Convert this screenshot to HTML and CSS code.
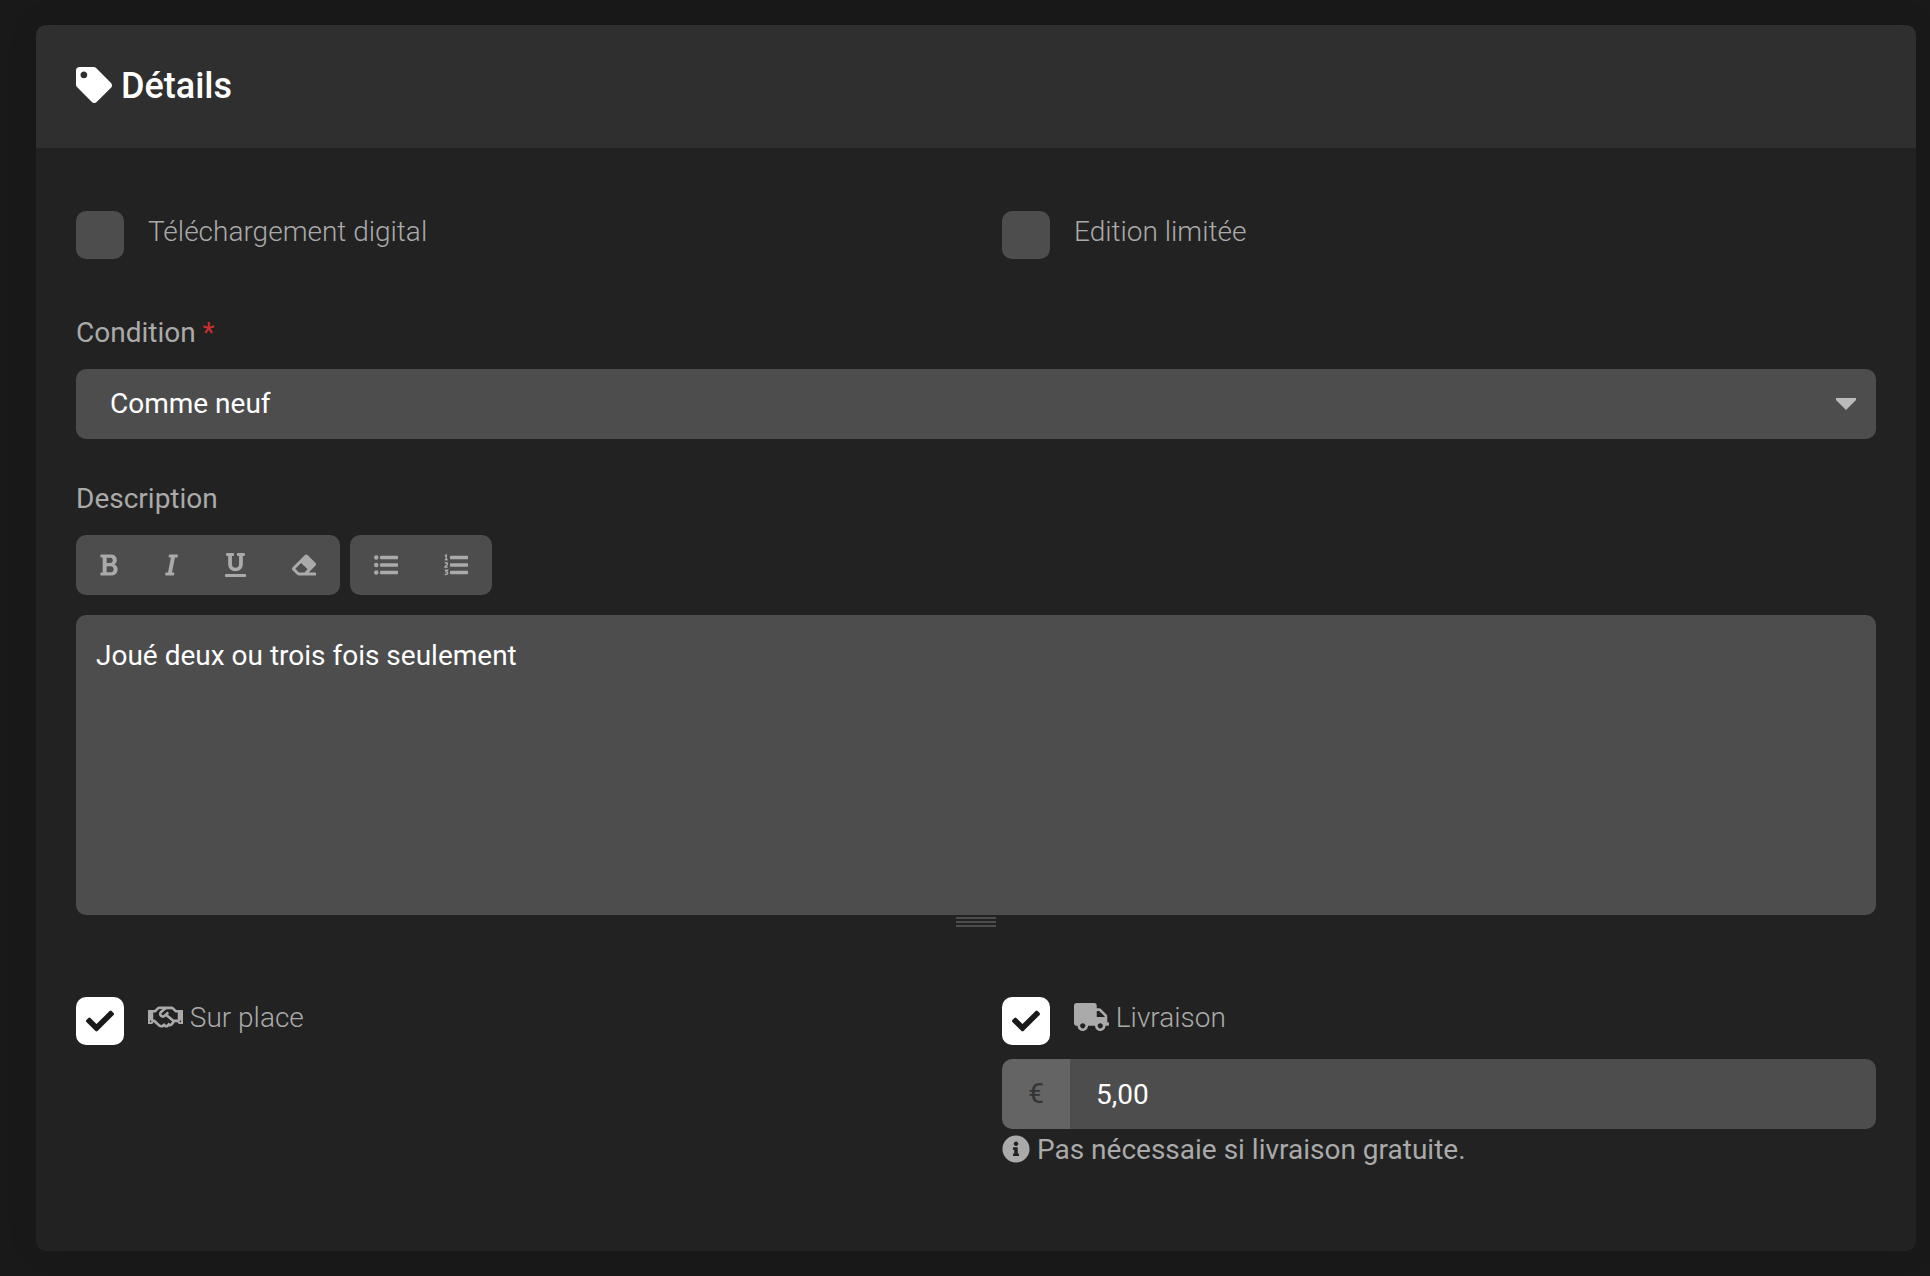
FILE: index.html
```html
<!DOCTYPE html>
<html lang="fr">
<head>
<meta charset="utf-8">
<meta name="viewport" content="width=device-width, initial-scale=1">
<title>Détails</title>
<link rel="stylesheet" href="styles.css">
</head>
<body>
<form class="card">
  <header class="card-header">
    <h2 class="card-title"><svg class="icon" viewBox="0 0 512 512" aria-hidden="true"><path d="M0 252.118V48C0 21.49 21.49 0 48 0h204.118a48 48 0 0 1 33.941 14.059l211.882 211.882c18.744 18.745 18.744 49.136 0 67.882L293.823 497.941c-18.745 18.744-49.136 18.744-67.882 0L14.059 286.059A48 48 0 0 1 0 252.118zM112 64c-26.51 0-48 21.49-48 48s21.49 48 48 48 48-21.49 48-48-21.49-48-48-48z"/></svg> Détails</h2>
  </header>
  <div class="card-body">
    <div class="columns">
      <div class="check">
        <input class="check-input" type="checkbox" id="digital">
        <label class="check-label" for="digital">Téléchargement digital</label>
      </div>
      <div class="check">
        <input class="check-input" type="checkbox" id="limited">
        <label class="check-label" for="limited">Edition limitée</label>
      </div>
    </div>

    <div class="field field-condition">
      <label class="field-label" for="condition">Condition <span class="required">*</span></label>
      <div class="select-wrap">
        <select class="control select" id="condition">
          <option selected>Comme neuf</option>
        </select>
        <svg class="select-arrow" viewBox="0 0 20 12" aria-hidden="true"><path d="M0 0h20v2L10 12 0 2z"/></svg>
      </div>
    </div>

    <div class="field">
      <label class="field-label" for="description">Description</label>
      <div class="toolbar">
        <div class="button-group">
          <button class="tool" type="button" aria-label="Gras"><svg class="icon icon-bold" viewBox="0 0 384 512"><path d="M304.793 243.891c33.639-18.537 53.657-54.16 53.657-95.693 0-48.236-26.25-87.626-68.626-104.179C265.138 34.01 240.849 32 209.661 32H24c-8.837 0-16 7.163-16 16v33.049c0 8.837 7.163 16 16 16h33.113v318.53H24c-8.837 0-16 7.163-16 16V464c0 8.837 7.163 16 16 16h195.69c24.203 0 44.834-1.289 66.866-7.584C337.52 457.193 376 410.647 376 350.014c0-52.168-26.573-91.684-71.207-106.123zM142.217 100.809h67.444c16.294 0 27.536 2.019 37.525 6.717 15.828 8.479 24.906 26.502 24.906 49.446 0 35.029-20.32 56.79-53.029 56.79h-76.846V100.809zm112.642 305.475c-10.14 4.056-22.677 4.907-31.409 4.907h-81.233V281.943h84.367c39.645 0 63.057 25.38 63.057 63.057.001 28.425-13.66 52.483-34.782 61.284z"/></svg></button>
          <button class="tool" type="button" aria-label="Italique"><svg class="icon icon-italic" viewBox="0 0 320 512"><path d="M204.758 416h-33.849l62.092-320h40.725a16 16 0 0 0 15.704-12.937l6.242-32C297.599 41.184 290.034 32 279.968 32H120.235a16 16 0 0 0-15.704 12.937l-6.242 32C96.362 86.816 103.927 96 113.993 96h33.846l-62.09 320H46.278a16 16 0 0 0-15.704 12.935l-6.245 32C22.402 470.815 29.967 480 40.034 480h158.479a16 16 0 0 0 15.704-12.935l6.245-32c1.927-9.88-5.638-19.065-15.704-19.065z"/></svg></button>
          <button class="tool" type="button" aria-label="Souligné"><svg class="icon icon-underline" viewBox="0 0 448 512"><path d="M224.264 388.24c-91.669 0-156.603-51.165-156.603-151.392V64H39.37c-8.837 0-16-7.163-16-16V16c0-8.837 7.163-16 16-16h137.39c8.837 0 16 7.163 16 16v32c0 8.837-7.163 16-16 16h-28.813v172.848c0 53.699 28.314 79.444 76.317 79.444 46.966 0 75.796-25.434 75.796-79.965V64h-28.291c-8.837 0-16-7.163-16-16V16c0-8.837 7.163-16 16-16h136.868c8.837 0 16 7.163 16 16v32c0 8.837-7.163 16-16 16h-28.291v172.848c0 99.405-64.881 151.392-156.082 151.392zM16 448h416c8.837 0 16 7.163 16 16v32c0 8.837-7.163 16-16 16H16c-8.837 0-16-7.163-16-16v-32c0-8.837 7.163-16 16-16z"/></svg></button>
          <button class="tool" type="button" aria-label="Effacer la mise en forme"><svg class="icon" viewBox="0 0 512 512"><path d="M497.941 273.941c18.745-18.745 18.745-49.137 0-67.882l-160-160c-18.745-18.745-49.136-18.746-67.883 0l-256 256c-18.745 18.745-18.745 49.137 0 67.882l96 96A48.004 48.004 0 0 0 144 480h356c6.627 0 12-5.373 12-12v-40c0-6.627-5.373-12-12-12H355.883l142.058-142.059zm-302.627-62.627l137.373 137.373L265.373 416H150.628l-80-80 124.686-124.686z"/></svg></button>
        </div>
        <div class="button-group">
          <button class="tool" type="button" aria-label="Liste à puces"><svg class="icon" viewBox="0 0 512 512"><circle cx="48" cy="96" r="48"/><circle cx="48" cy="256" r="48"/><circle cx="48" cy="416" r="48"/><rect x="128" y="60" width="384" height="72" rx="16"/><rect x="128" y="220" width="384" height="72" rx="16"/><rect x="128" y="380" width="384" height="72" rx="16"/></svg></button>
          <button class="tool" type="button" aria-label="Liste numérotée"><svg class="icon" viewBox="0 0 512 512"><rect x="128" y="60" width="384" height="72" rx="16"/><rect x="128" y="220" width="384" height="72" rx="16"/><rect x="128" y="380" width="384" height="72" rx="16"/><path class="stroke" d="M18 66l30-20v96M16 144h64M18 218c20-18 56-12 56 14 0 28-50 40-54 70h62M18 368h56l-28 34c52-4 44 68-30 54"/></svg></button>
        </div>
      </div>
      <textarea class="control editor" id="description">Joué deux ou trois fois seulement</textarea>
      <div class="grip" aria-hidden="true"></div>
    </div>

    <div class="columns">
      <div class="check">
        <input class="check-input" type="checkbox" id="pickup" checked>
        <label class="check-label" for="pickup"><svg class="icon icon-wide" viewBox="0 0 640 512" aria-hidden="true"><path d="M519.2 127.9l-47.6-47.6A56.252 56.252 0 0 0 432 64H205.2c-14.8 0-29.1 5.9-39.6 16.3L118 127.9H0v255.7h64c17.6 0 31.8-14.2 31.9-31.7h9.1l84.6 76.4c30.9 25.1 73.8 25.7 105.6 3.8 12.5 10.8 26 15.9 41.1 15.9 18.2 0 35.3-7.4 48.8-24 22.1 8.7 48.2 2.6 64-16.8l26.2-32.3c5.6-6.9 9.1-14.8 10.9-23h57.9c.1 17.5 14.4 31.7 31.9 31.7h64V127.9H519.2zM48 351.6c-8.8 0-16-7.2-16-16s7.2-16 16-16 16 7.2 16 16c0 8.9-7.2 16-16 16zm390-6.9l-26.1 32.2c-2.8 3.4-7.8 4-11.3 1.2l-23.9-19.4-30 36.5c-6 7.3-15 4.8-18 2.4l-36.8-31.5-15.6 19.2c-13.9 17.1-39.2 19.7-55.3 6.6l-97.3-88H96V175.8h41.9l61.7-61.6c2-.8 3.7-1.5 5.7-2.3H262l-38.7 35.5c-29.4 26.9-31.1 72.3-4.4 101.3 14.8 16.2 61.2 41.2 101.5 4.4l8.2-7.5 108.2 87.8c3.4 2.8 3.9 7.9 1.2 11.3zm106-40.8h-69.2c-2.3-2.8-4.9-5.4-7.7-7.7l-102.7-83.4 12.5-11.4c6.5-6 7-16.1 1-22.6L367 167.1c-6-6.5-16.1-6.9-22.6-1l-55.2 50.6c-9.5 8.7-25.7 9.4-34.6 0-9.3-9.9-8.5-25.1 1.2-33.9l65.6-60.1c7.4-6.8 17-10.5 27-10.5l83.7-.2c2.1 0 4.1.8 5.5 2.3l61.7 61.6H544v128zm48 47.7c-8.8 0-16-7.2-16-16s7.2-16 16-16 16 7.2 16 16c0 8.9-7.2 16-16 16z"/></svg> Sur place</label>
      </div>
      <div class="delivery">
        <div class="check">
          <input class="check-input" type="checkbox" id="delivery" checked>
          <label class="check-label" for="delivery"><svg class="icon icon-wide" viewBox="0 0 640 512" aria-hidden="true"><path d="M624 352h-16V243.9c0-12.7-5.1-24.9-14.1-33.9L494 110.1c-9-9-21.2-14.1-33.9-14.1H416V48c0-26.5-21.5-48-48-48H48C21.5 0 0 21.5 0 48v320c0 26.5 21.5 48 48 48h16c0 53 43 96 96 96s96-43 96-96h128c0 53 43 96 96 96s96-43 96-96h48c8.8 0 16-7.2 16-16v-32c0-8.8-7.2-16-16-16zM160 464c-26.5 0-48-21.5-48-48s21.5-48 48-48 48 21.5 48 48-21.5 48-48 48zm320 0c-26.5 0-48-21.5-48-48s21.5-48 48-48 48 21.5 48 48-21.5 48-48 48zm80-208H416V144h44.1l99.9 99.9V256z"/></svg> Livraison</label>
        </div>
        <div class="input-group">
          <label class="input-prefix" for="price">€</label>
          <input class="control input" type="text" id="price" value="5,00" aria-describedby="price-help">
        </div>
        <p class="help" id="price-help"><svg class="icon" viewBox="0 0 512 512" aria-hidden="true"><path d="M256 8C119.043 8 8 119.083 8 256c0 136.997 111.043 248 248 248s248-111.003 248-248C504 119.083 392.957 8 256 8zm0 110c23.196 0 42 18.804 42 42s-18.804 42-42 42-42-18.804-42-42 18.804-42 42-42zm56 254c0 6.627-5.373 12-12 12h-88c-6.627 0-12-5.373-12-12v-24c0-6.627 5.373-12 12-12h12v-64h-12c-6.627 0-12-5.373-12-12v-24c0-6.627 5.373-12 12-12h64c6.627 0 12 5.373 12 12v100h12c6.627 0 12 5.373 12 12v24z"/></svg> Pas nécessaie si livraison gratuite.</p>
      </div>
    </div>
  </div>
</form>
</body>
</html>
```
FILE: styles.css
```css
*,
*::before,
*::after {
  box-sizing: border-box;
}

body {
  margin: 0;
  padding: 25px 14px 25px 36px;
  background: #191919;
  color: #aaa;
  font: 400 28px/42px Roboto, sans-serif;
}

.card {
  background: #222;
  border-radius: 10px;
  box-shadow: 0 0 30px rgba(0, 0, 0, 0.1);
  overflow: hidden;
}

.card-header {
  padding: 40px;
  background: #2f2f2f;
}

.card-title {
  margin: 0;
  color: #fff;
  font-size: 36px;
  font-weight: 500;
  line-height: 43px;
}

.card-body {
  padding: 63px 40px 80px;
}

.icon {
  width: 1em;
  height: 1em;
  fill: currentColor;
  vertical-align: -0.125em;
  overflow: visible;
}

.icon-wide {
  width: 35px;
}

.icon-bold {
  width: 18px;
}

.icon-italic {
  width: 15px;
}

.icon-underline {
  width: 21px;
}

.stroke {
  fill: none;
  stroke: currentColor;
  stroke-width: 30px;
}

.columns {
  display: grid;
  grid-template-columns: 1fr 1fr;
  gap: 52px;
}

.check {
  display: flex;
  align-items: flex-start;
  gap: 24px;
}

.check-input {
  display: grid;
  place-items: center;
  flex: none;
  width: 48px;
  height: 48px;
  margin: 0;
  appearance: none;
  background: #4d4d4d;
  border-radius: 10px;
}

.check-input:checked {
  background: #fff;
}

.check-input:checked::before {
  content: "";
  width: 28px;
  height: 28px;
  background: #191919;
  clip-path: path("M9.5 24 .4 14.9q-.8-1 0-2l2-2q1-.8 2 0l6.1 6.2L23.6 4q1-.8 2 0l2 2q.8 1 0 2L11.5 24q-1 .8-2 0z");
}

.check-label {
  font-weight: 300;
}

.field {
  margin-bottom: 39px;
}

.field-condition {
  margin-top: 53px;
}

.field-label {
  display: block;
  margin-bottom: 15px;
}

.required {
  color: #c9302c;
}

.control {
  display: block;
  width: 100%;
  margin: 0;
  border: 0;
  border-radius: 10px;
  background: #4d4d4d;
  color: #fff;
  font: inherit;
}

.select-wrap {
  position: relative;
}

.select {
  height: 70px;
  padding: 0 60px 0 34px;
  appearance: none;
}

.select-arrow {
  position: absolute;
  top: 29px;
  right: 20px;
  width: 20px;
  height: 12px;
  fill: #bbb;
  pointer-events: none;
}

.toolbar {
  display: flex;
  gap: 10px;
  margin-bottom: 20px;
}

.button-group {
  display: flex;
  border-radius: 10px;
  background: #4d4d4d;
}

.tool {
  display: flex;
  align-items: center;
  height: 60px;
  padding: 0 24px;
  border: 0;
  background: none;
  color: #aaa;
  font-size: 24px;
}

.tool + .tool {
  margin-left: -2px;
}

.editor {
  height: 300px;
  padding: 20px;
  resize: none;
}

.grip {
  width: 40px;
  height: 10px;
  margin: 2px auto 70px;
  background: repeating-linear-gradient(#4d4d4d 0 2px, transparent 2px 4px);
}

.input-group {
  display: flex;
  margin-top: 14px;
  border-radius: 10px;
  overflow: hidden;
}

.input-prefix {
  display: grid;
  place-items: center;
  flex: none;
  width: 68px;
  background: #646464;
  color: #333;
}

.input {
  flex: 1;
  min-width: 0;
  height: 70px;
  padding: 0 26px;
  border-radius: 0;
}

.help {
  margin: 0;
}

@media (max-width: 900px) {
  .columns {
    grid-template-columns: 1fr;
  }
}
```
